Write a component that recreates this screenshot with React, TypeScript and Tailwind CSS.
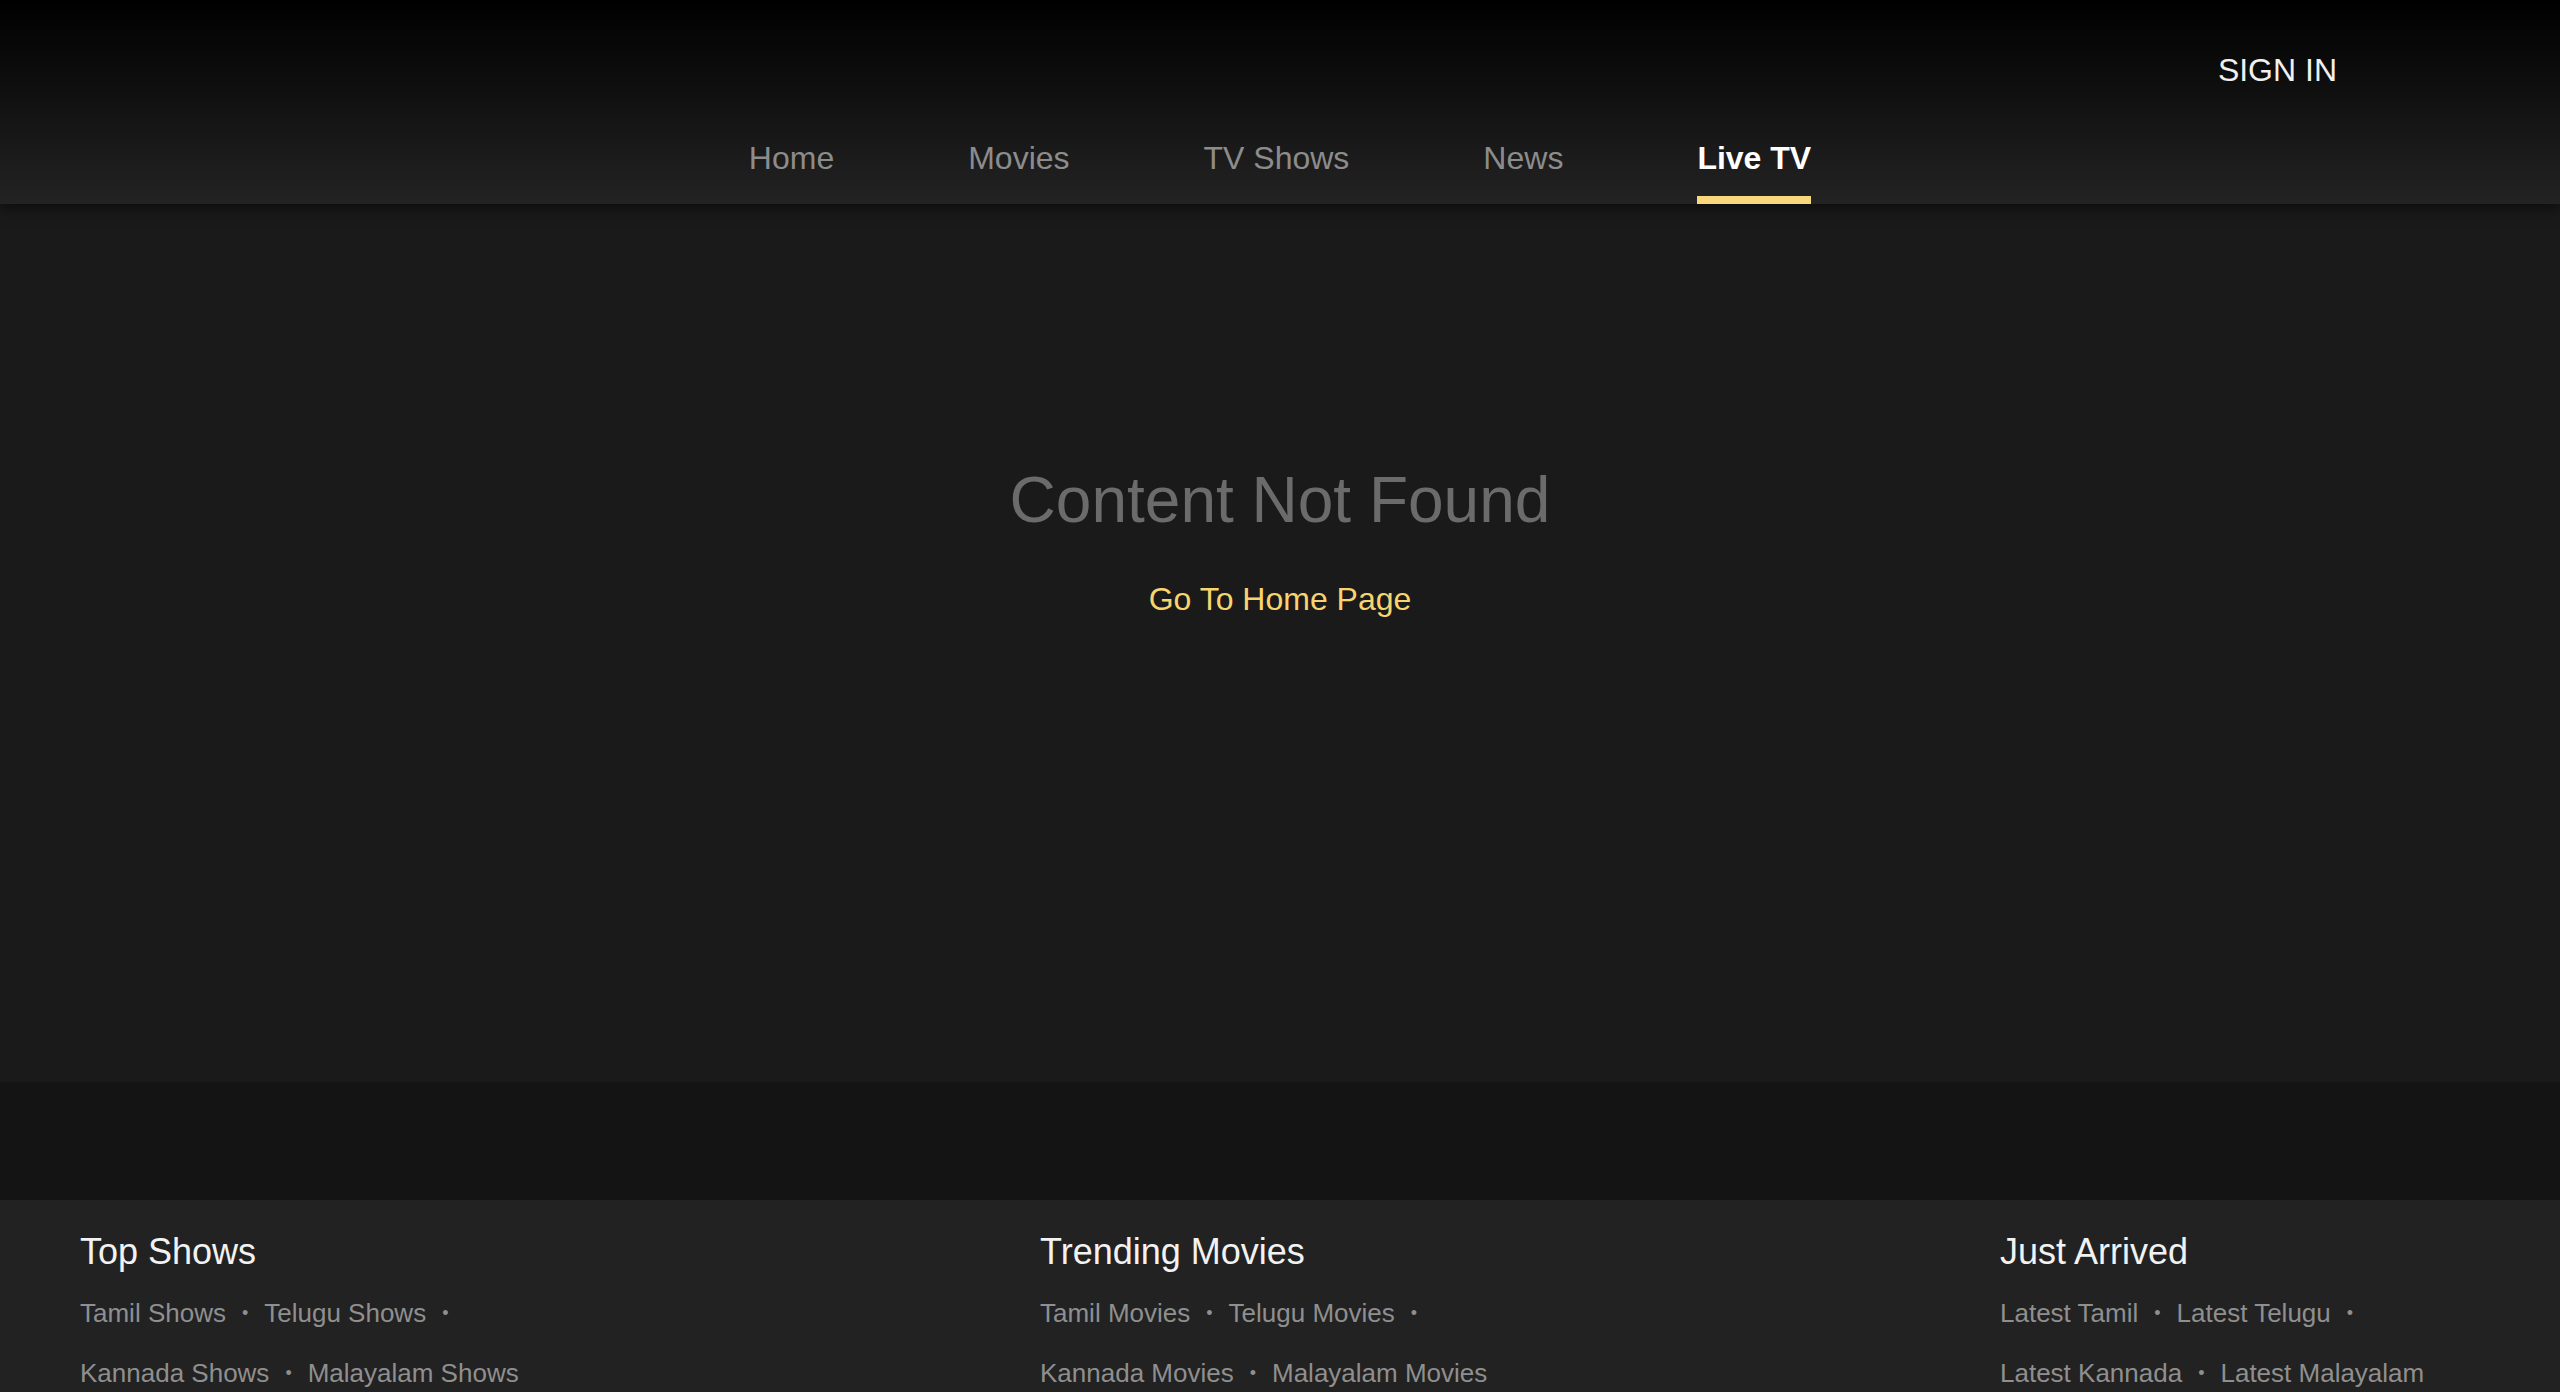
const navItems = ["Home", "Movies", "TV Shows", "News", "Live TV"];

const footerCols = [
  {
    title: "Top Shows",
    links: ["Tamil Shows", "Telugu Shows", "Kannada Shows", "Malayalam Shows"],
  },
  {
    title: "Trending Movies",
    links: ["Tamil Movies", "Telugu Movies", "Kannada Movies", "Malayalam Movies"],
  },
  {
    title: "Just Arrived",
    links: ["Latest Tamil", "Latest Telugu", "Latest Kannada", "Latest Malayalam"],
  },
];

function Header() {
  return (
    <header
      className="
        relative z-10 h-[204px] flex flex-col pt-[50px]
        bg-[linear-gradient(to_bottom,#000000,#232323)]
        shadow-[0_4px_14px_rgba(0,0,0,0.55)]
      "
    >
      <div className="flex flex-row justify-end pr-[223px] h-[40px]">
        <button className="text-[32px] leading-[40px] text-[#f0f0f0]">SIGN IN</button>
      </div>
      <nav className="flex flex-row justify-center gap-[134px] mt-[48px]">
        {navItems.map((item) => {
          const active = item === "Live TV";
          return (
            <a key={item} className="flex flex-col cursor-pointer">
              <span
                className={
                  active
                    ? "text-[32px] leading-[40px] font-bold text-white"
                    : "text-[32px] leading-[40px] text-[#8c8c8c]"
                }
              >
                {item}
              </span>
              <span className={active ? "mt-[18px] h-2 bg-[#f9d87d]" : "mt-[18px] h-2"} />
            </a>
          );
        })}
      </nav>
    </header>
  );
}

function FooterColumn({ title, links }: { title: string; links: string[] }) {
  return (
    <div className="w-[480px] flex flex-col">
      <h3 className="text-[36px] leading-[44px] text-[#f2f2f2]">{title}</h3>
      <ul className="flex flex-row flex-wrap mt-[9px]">
        {links.map((link, i) => (
          <li key={link} className="flex flex-row items-center text-[26px] leading-[60px] text-[#8f8f8f]">
            <a className="cursor-pointer">{link}</a>
            {i < links.length - 1 && (
              <span className="mx-[16px] text-[18px] text-[#8f8f8f]">•</span>
            )}
          </li>
        ))}
      </ul>
    </div>
  );
}

export default function App() {
  return (
    <div className="min-h-screen bg-[#1a1a1a] font-['Liberation_Sans',Arial,sans-serif]">
      <Header />
      <main className="h-[878px] flex flex-col items-center pt-[258px]">
        <h1 className="text-[64px] leading-[76px] text-[#6b6b6b]">Content Not Found</h1>
        <a className="mt-[41px] text-[32px] leading-[40px] text-[#f8d46f] cursor-pointer">Go To Home Page</a>
      </main>
      <div className="h-[118px] bg-[#141414]" />
      <footer className="bg-[#222222] flex flex-row justify-between px-[80px] pt-[30px] pb-[60px]">
        {footerCols.map((col) => (
          <FooterColumn key={col.title} title={col.title} links={col.links} />
        ))}
      </footer>
    </div>
  );
}
